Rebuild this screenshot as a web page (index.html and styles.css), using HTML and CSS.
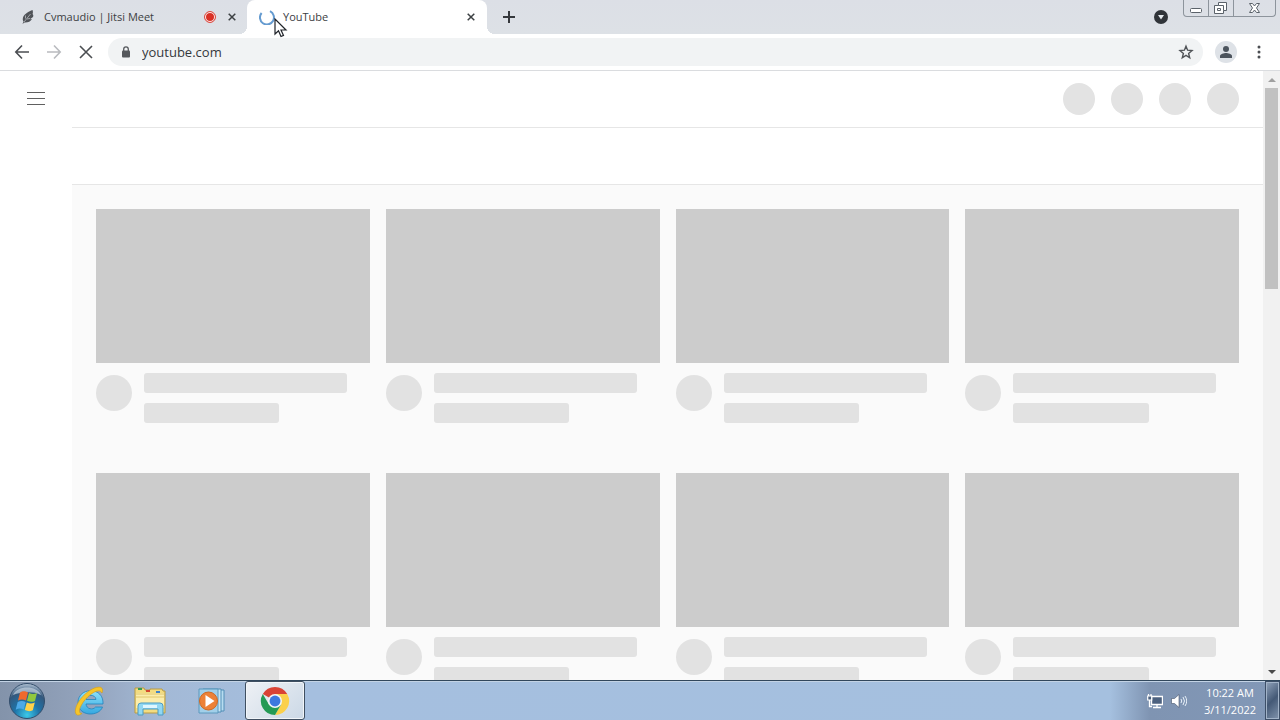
FILE: index.html
```html
<!DOCTYPE html>
<html lang="en">
<head>
<meta charset="utf-8">
<meta name="viewport" content="width=device-width, initial-scale=1">
<title>YouTube</title>
<link rel="stylesheet" href="styles.css">
</head>
<body>
<header class="tabstrip">
  <div class="tab">
    <svg class="favicon" viewBox="0 0 16 16"><path d="M12.500 1C9 2.500 4 5 3 8.500c-.6 2 0 3.500.6 4L2.500 15l2-1.500c3.500.2 6-1 7.500-3.500l-2 .2 3-2.200c.7-1.500.2-2.500-.5-3C13.200 4 13 2.500 12.500 1z" fill="#505358"/><path d="M4 13 10.500 5M5.500 9.500V6.500M7 10l3-.5" stroke="#a2a5aa" fill="none"/></svg>
    <span class="tab-title">Cvmaudio | Jitsi Meet</span>
    <svg class="rec" viewBox="0 0 12 12" aria-label="Recording"><circle cx="6" cy="6" r="5.400" fill="#fff" stroke="#d93025"/><circle cx="6" cy="6" r="4" fill="#d93025"/></svg>
    <button class="tab-close" aria-label="Close tab"><svg viewBox="0 0 8 8"><path d="M.7.7l6.600 6.600M7.300.7.7 7.300" stroke="#3c4043" stroke-width="1.500"/></svg></button>
  </div>
  <div class="tab tab-active">
    <svg class="favicon" viewBox="0 0 16 16"><path d="M2.600 4A7 7 0 1 0 11 2.200" fill="none" stroke="#659bd0" stroke-width="2"/></svg>
    <span class="tab-title">YouTube</span>
    <button class="tab-close" aria-label="Close tab"><svg viewBox="0 0 8 8"><path d="M.7.7l6.600 6.600M7.300.7.7 7.300" stroke="#3c4043" stroke-width="1.500"/></svg></button>
    <svg class="cursor" viewBox="0 0 14 20"><path d="M1 1v15l3.500-3.300L7 18.500l2.500-1.100L7 12h5z" fill="#fff" stroke="#20242a" stroke-width="1.200"/></svg>
  </div>
  <button class="new-tab" aria-label="New tab"><svg viewBox="0 0 12 12"><path d="M6 0v12M0 6h12" stroke="#35383c" stroke-width="2"/></svg></button>
  <button class="tab-search" aria-label="Search tabs"><svg viewBox="0 0 14 14"><circle cx="7" cy="7" r="7" fill="#303439"/><path d="M4 5h6L7 9.500z" fill="#e5eaee"/></svg></button>
  <div class="window-controls">
    <button class="wc wc-min" aria-label="Minimize"><svg viewBox="0 0 24 16"><rect x="6.500" y="8.500" width="11" height="4" rx="1" fill="#fff" stroke="#5b626a"/></svg></button>
    <button class="wc wc-max" aria-label="Restore"><svg viewBox="0 0 24 16"><path d="M9.500 2.500h8v8h-3v3h-9v-8h4z" fill="#fff" stroke="#5b626a"/><path d="M9.500 5.500h5v5M8.500 8.500h3v2h-3z" fill="none" stroke="#5b626a"/></svg></button>
    <button class="wc wc-close" aria-label="Close"><svg viewBox="0 0 41 16"><path d="M15.500 3.500h3l2 2.500 2-2.500h3L22.500 8l3 4.500h-3l-2-2.500-2 2.500h-3l3-4.500z" fill="#fff" stroke="#5b626a"/></svg></button>
  </div>
</header>

<nav class="toolbar" aria-label="Browser">
  <button class="tool" aria-label="Back"><svg viewBox="0 0 16 16"><path d="M15 8H2M8 1.500 1.800 8 8 14.500" stroke="#4b4e52"/></svg></button>
  <button class="tool" aria-label="Forward" disabled><svg viewBox="0 0 16 16"><path d="M1 8h13M8 1.500 14.200 8 8 14.500" stroke="#b9bbbf"/></svg></button>
  <button class="tool" aria-label="Stop"><svg viewBox="0 0 16 16"><path d="M2 2l12 12M14 2 2 14" stroke="#4b4e52"/></svg></button>
  <div class="omnibox">
    <svg class="lock" viewBox="0 0 10 12"><rect x="1" y="4.500" width="8" height="7" rx="1" fill="#55585c"/><path d="M2.700 5V3.200a2.300 2.300 0 0 1 4.600 0V5" fill="none" stroke="#55585c" stroke-width="1.300"/></svg>
    <input class="url" type="text" value="youtube.com" aria-label="Address">
    <button class="star" aria-label="Bookmark"><svg viewBox="0 0 16 16"><path d="M8 2.200l1.600 4 4.400.3-3.400 2.900 1.100 4.400L8 11.400l-3.700 2.400 1.100-4.400L2 6.500l4.400-.3z" fill="none" stroke="#505357" stroke-width="1.400"/></svg></button>
  </div>
  <button class="profile" aria-label="Profile"><svg viewBox="0 0 22 22"><circle cx="11" cy="11" r="11" fill="#dee2e7"/><circle cx="11" cy="8" r="3" fill="#4c545d"/><path d="M5 17v-2c0-2 4-3 6-3s6 1 6 3v2z" fill="#4c545d"/></svg></button>
  <button class="menu" aria-label="Menu"><svg viewBox="0 0 4 14"><g fill="#4b4e52"><circle cx="2" cy="2" r="1.500"/><circle cx="2" cy="7" r="1.500"/><circle cx="2" cy="12" r="1.500"/></g></svg></button>
</nav>

<div class="viewport">
  <aside class="guide"><button class="guide-btn" aria-label="Guide"><svg viewBox="0 0 18 13"><path d="M0 .5h18M0 6.500h18M0 12.500h18" stroke="#606060"/></svg></button></aside>
  <main class="page">
    <div class="masthead"><i class="dot"></i><i class="dot"></i><i class="dot"></i><i class="dot"></i></div>
    <div class="chips"></div>
    <div class="feed">
      <article class="card"><div class="thumb"></div><div class="details"><i class="avatar"></i><div class="lines"><i class="line"></i><i class="line line-short"></i></div></div></article>
      <article class="card"><div class="thumb"></div><div class="details"><i class="avatar"></i><div class="lines"><i class="line"></i><i class="line line-short"></i></div></div></article>
      <article class="card"><div class="thumb"></div><div class="details"><i class="avatar"></i><div class="lines"><i class="line"></i><i class="line line-short"></i></div></div></article>
      <article class="card"><div class="thumb"></div><div class="details"><i class="avatar"></i><div class="lines"><i class="line"></i><i class="line line-short"></i></div></div></article>
      <article class="card"><div class="thumb"></div><div class="details"><i class="avatar"></i><div class="lines"><i class="line"></i><i class="line line-short"></i></div></div></article>
      <article class="card"><div class="thumb"></div><div class="details"><i class="avatar"></i><div class="lines"><i class="line"></i><i class="line line-short"></i></div></div></article>
      <article class="card"><div class="thumb"></div><div class="details"><i class="avatar"></i><div class="lines"><i class="line"></i><i class="line line-short"></i></div></div></article>
      <article class="card"><div class="thumb"></div><div class="details"><i class="avatar"></i><div class="lines"><i class="line"></i><i class="line line-short"></i></div></div></article>
    </div>
  </main>
  <div class="scrollbar">
    <button class="arrow" aria-label="Scroll up"><svg viewBox="0 0 8 4"><path d="M0 4l4-4 4 4z" fill="#a0a0a0"/></svg></button>
    <div class="track"><div class="handle"></div></div>
    <button class="arrow" aria-label="Scroll down"><svg viewBox="0 0 8 4"><path d="M0 0l4 4 4-4z" fill="#4a4a4a"/></svg></button>
  </div>
</div>

<footer class="taskbar">
  <button class="start" aria-label="Start"><svg viewBox="0 0 38 38">
    <defs><radialGradient id="orb" cx=".5" cy=".9" r=".9"><stop offset="0" stop-color="#3cc9e8"/><stop offset=".4" stop-color="#1e73a8"/><stop offset=".75" stop-color="#34587d"/><stop offset="1" stop-color="#b5c5d6"/></radialGradient></defs>
    <circle cx="19" cy="19" r="17.500" fill="url(#orb)" stroke="#334e6c"/>
    <path d="M5 13C9 3 29 3 33 13 25 9 13 10 5 13z" fill="#d9e3ed" opacity=".6"/>
    <path d="M12 10.500c3-2 5-1.500 8 0l-2 8c-3-1.500-5-1.500-8 0z" fill="#ef6a2c"/><path d="M21 11c3 1.300 5 1.300 8 0l-2 8c-3 1.300-5 1-8-.2z" fill="#91c83e"/><path d="M9.700 20c3-1.500 5-1.500 8 0l-2 7.500c-3-1.500-5-1.300-8 .2z" fill="#4da9e8"/><path d="M18.800 20.500c3 1.300 5 1.300 8 0l-2 7.800c-3 1.300-5 1-8-.2z" fill="#ffd14a"/></svg></button>
  <button class="task" aria-label="Internet Explorer"><svg viewBox="0 0 32 32">
    <defs><linearGradient id="ie" x2="0" y2="1"><stop stop-color="#8fe1fa"/><stop offset="1" stop-color="#35a8e0"/></linearGradient></defs>
    <path d="M30 19H13c.3 5 7 6.500 9.500 3h7C26 32 5 32 5 17.500 5 2 31 1 30 19zM13 14.500h10c-.5-5.500-9.500-5.500-10 0z" fill="url(#ie)" stroke="#2283bd" stroke-width=".8" fill-rule="evenodd"/>
    <path d="M29 8c3-8-6-7-13-2C7 12 0 24 3 29c1 2 4 1 6-.5-4 0-3-5 1-11C15 10 26 2 29 8z" fill="#f5c52b" stroke="#d49b17" stroke-width=".6"/></svg></button>
  <button class="task" aria-label="Windows Explorer"><svg viewBox="0 0 32 32">
    <path d="M1 3h9l1 2h5V4h12l1 2h2v22H1z" fill="#f3dc81" stroke="#b99b45"/><path d="M2 8h28v15H2z" fill="#fbedac"/><path d="M2 9h28M2 12h28" stroke="#e0c66b"/>
    <path d="M4 3h4v2H4z" fill="#379b54"/><path d="M12 5h4v2h-4z" fill="#d4492f"/><path d="M22 6h4v2h-4z" fill="#3e83cb"/>
    <path d="M4 30v-9q0-3 3-3h19q3 0 3 3v9h-5v-6H9v6z" fill="#91d7f2" stroke="#4b9bc3"/><path d="M9 20h14v3H9z" fill="#def6ff"/></svg></button>
  <button class="task" aria-label="Media Player"><svg viewBox="0 0 32 32">
    <path d="M12 5h17v21H12z" fill="#b7dcf0" stroke="#538fb7"/><path d="M8 4h18v23H8z" fill="#c7e6f5" stroke="#538fb7"/><path d="M4 4h19v24H4z" fill="#a1cfe9" stroke="#5b98bd"/>
    <circle cx="13.500" cy="16" r="9" fill="#ec8137" stroke="#cf6820"/><path d="M10.500 10v12l9-6z" fill="#fff"/></svg></button>
  <button class="task task-active" aria-label="Google Chrome"><svg viewBox="0 0 32 32">
    <path d="M16 16 3 8.500A15 15 0 0 1 29 8.500z" fill="#d94335"/><path d="M16 8.500h13A15 15 0 0 1 16 31l6.500-11.300z" fill="#fbd04b"/><path d="M3 8.500A15 15 0 0 0 16 31l6.500-11.300L9.500 19.700z" fill="#249a55"/><circle cx="16" cy="16" r="7.500" fill="#f2f5f7"/><circle cx="16" cy="16" r="5.800" fill="#3d78df"/></svg></button>
  <div class="tray">
    <svg class="tray-icon" viewBox="0 0 16 16" aria-label="Network"><path d="M4.500 3.500h11v8h-11z" fill="#4c617f" stroke="#fff" stroke-width="1.400"/><path d="M10 12v2M6 14.500h8M2.500 7v6.500H5" stroke="#fff" fill="none" stroke-width="1.300"/><path d="M.7 3h4v4h-4zM1.500 1v2M4 1v2" fill="#4c617f" stroke="#fff" stroke-width="1.200"/></svg>
    <svg class="tray-icon" viewBox="0 0 16 16" aria-label="Volume"><path d="M.5 5.500h3L8 1.500v13l-4.500-4h-3z" fill="#fff" stroke="#43536a" stroke-width=".6"/><path d="M10 6q1.500 2 0 4M12 4q3 4 0 8M14 3q3.500 5 0 10" stroke="#e8f0f8" fill="none"/></svg>
    <div class="clock"><span>10:22 AM</span><span>3/11/2022</span></div>
  </div>
  <button class="show-desktop" aria-label="Show desktop"></button>
</footer>
</body>
</html>
```
FILE: styles.css
```css
* { box-sizing: border-box; }
body {
  margin: 0;
  height: 100vh;
  display: flex;
  flex-direction: column;
  overflow: hidden;
  background: #fff;
  color: #3c4043;
  font: 11px/16px "Open Sans", "Noto Sans", sans-serif;
}
button {
  display: flex;
  align-items: center;
  justify-content: center;
  margin: 0;
  padding: 0;
  border: 0;
  background: none;
  flex: none;
}
svg { display: block; flex: none; }

/* Tab strip */
.tabstrip {
  flex: none;
  display: flex;
  height: 34px;
  background: linear-gradient(#dcdfe6, #dde1e6);
}
.tab {
  position: relative;
  display: flex;
  align-items: center;
  width: 247px;
  padding: 0 10px 0 20px;
}
.tab-active {
  width: 240px;
  padding: 0 11px 0 12px;
  background: #fff;
  border-radius: 8px 8px 0 0;
}
.tab-active::before,
.tab-active::after {
  content: "";
  position: absolute;
  bottom: 0;
  width: 8px;
  height: 8px;
}
.tab-active::before { right: 100%; background: radial-gradient(circle at 0 0, transparent 8px, #fff 8px); }
.tab-active::after { left: 100%; background: radial-gradient(circle at 100% 0, transparent 8px, #fff 8px); }
.favicon { width: 16px; height: 16px; margin-right: 8px; }
.tab-title { flex: 1; white-space: nowrap; }
.rec { width: 12px; height: 12px; margin-right: 11px; }
.tab-close { width: 10px; height: 16px; }
.tab-close svg { width: 8px; height: 8px; }
.cursor { position: absolute; left: 27px; top: 18px; width: 14px; height: 20px; z-index: 2; }
.new-tab { width: 28px; margin-left: 8px; }
.new-tab svg { width: 12px; height: 12px; }
.tab-search { margin-left: auto; width: 28px; }
.tab-search svg { width: 14px; height: 14px; }
.window-controls {
  display: flex;
  height: 17px;
  margin: 0 4px 0 8px;
  border: 1px solid #8d949c;
  border-top: 0;
  border-radius: 0 0 4px 4px;
}
.wc + .wc { border-left: 1px solid #8d949c; }
.wc svg { height: 16px; }
.wc-min svg, .wc-max svg { width: 24px; }
.wc-close svg { width: 41px; }

/* Toolbar */
.toolbar {
  flex: none;
  display: flex;
  align-items: center;
  height: 37px;
  padding: 0 10px 0 6px;
  border-bottom: 1px solid #dadcdf;
}
.tool { width: 32px; height: 32px; }
.tool svg { width: 16px; height: 16px; fill: none; stroke-width: 1.6; }
.omnibox {
  flex: 1;
  display: flex;
  align-items: center;
  height: 28px;
  margin: 0 12px 0 6px;
  padding: 0 9px 0 13px;
  border-radius: 14px;
  background: #f1f3f4;
}
.lock { width: 10px; height: 12px; margin-right: 11px; }
.url {
  flex: 1;
  min-width: 0;
  padding: 0;
  border: 0;
  outline: 0;
  background: none;
  color: #35383c;
  font: 13px/20px "Open Sans", "Noto Sans", sans-serif;
}
.star svg { width: 16px; height: 16px; }
.profile svg { width: 22px; height: 22px; }
.menu { width: 23px; height: 24px; margin-left: 10px; }
.menu svg { width: 4px; height: 14px; }

/* Loading page */
.viewport { flex: 1; min-height: 0; display: flex; }
.guide { flex: none; width: 72px; }
.guide-btn { width: 72px; height: 55px; }
.guide-btn svg { width: 18px; height: 13px; }
.page { flex: 1; min-width: 0; overflow: hidden; background: #fafafa; }
.masthead {
  display: flex;
  align-items: center;
  justify-content: flex-end;
  gap: 16px;
  height: 57px;
  padding-right: 24px;
  border-bottom: 1px solid #e6e6e6;
  background: #fff;
}
.dot { width: 32px; height: 32px; border-radius: 50%; background: #e3e3e3; }
.chips { height: 57px; border-bottom: 1px solid #e6e6e6; background: #fff; }
.feed {
  display: grid;
  grid-template-columns: repeat(4, 1fr);
  gap: 50px 16px;
  padding: 24px;
}
.thumb { aspect-ratio: 16 / 9; background: #ccc; }
.details { display: flex; gap: 12px; padding-top: 10px; }
.avatar { width: 36px; height: 36px; margin-top: 2px; border-radius: 50%; background: #e2e2e2; }
.lines { flex: 1; display: flex; flex-direction: column; gap: 10px; }
.line { width: 90%; height: 20px; border-radius: 3px; background: #e2e2e2; }
.line-short { width: 60%; }

.scrollbar { flex: none; display: flex; flex-direction: column; width: 17px; background: #f1f1f1; }
.arrow { height: 17px; width: 17px; }
.arrow svg { width: 8px; height: 4px; }
.track { flex: 1; padding: 0 2px; }
.handle { height: 35%; background: #c1c1c1; }

/* Taskbar */
.taskbar {
  flex: none;
  display: flex;
  height: 40px;
  border-top: 1px solid #31475c;
  box-shadow: inset 0 1px #c3d3e5;
  background: linear-gradient(90deg, #8393aa 0, #94a4bd 90px, #a3b9d6 160px, #a5bfdf 300px, #a5c0df calc(100% - 170px), #7f94b2 calc(100% - 130px), #8298b7 100%);
}
.start { width: 54px; }
.start svg { width: 38px; height: 38px; }
.task { width: 60px; margin-right: 1px; padding-left: 10px; }
.task svg { width: 32px; height: 32px; }
.task-active {
  margin-left: 8px;
  padding: 0;
  border: 1px solid #3f4f61;
  border-radius: 3px;
  background: linear-gradient(135deg, #eef1f5, #cbd8e6);
  box-shadow: inset 0 0 0 1px #f1f5f9;
}
.task-active svg { width: 30px; height: 30px; }
.tray { display: flex; align-items: center; gap: 8px; margin-left: auto; color: #fff; }
.tray-icon { width: 16px; height: 16px; }
.clock { display: flex; flex-direction: column; width: 56px; text-align: center; line-height: 17px; margin: 0 7px; }
.show-desktop {
  width: 15px;
  border: 1px solid #3d4f68;
  box-shadow: inset 0 0 0 1px #a2b3c8;
  background: linear-gradient(135deg, #91a3bb, #445976 50%, #8194ad);
}
```
